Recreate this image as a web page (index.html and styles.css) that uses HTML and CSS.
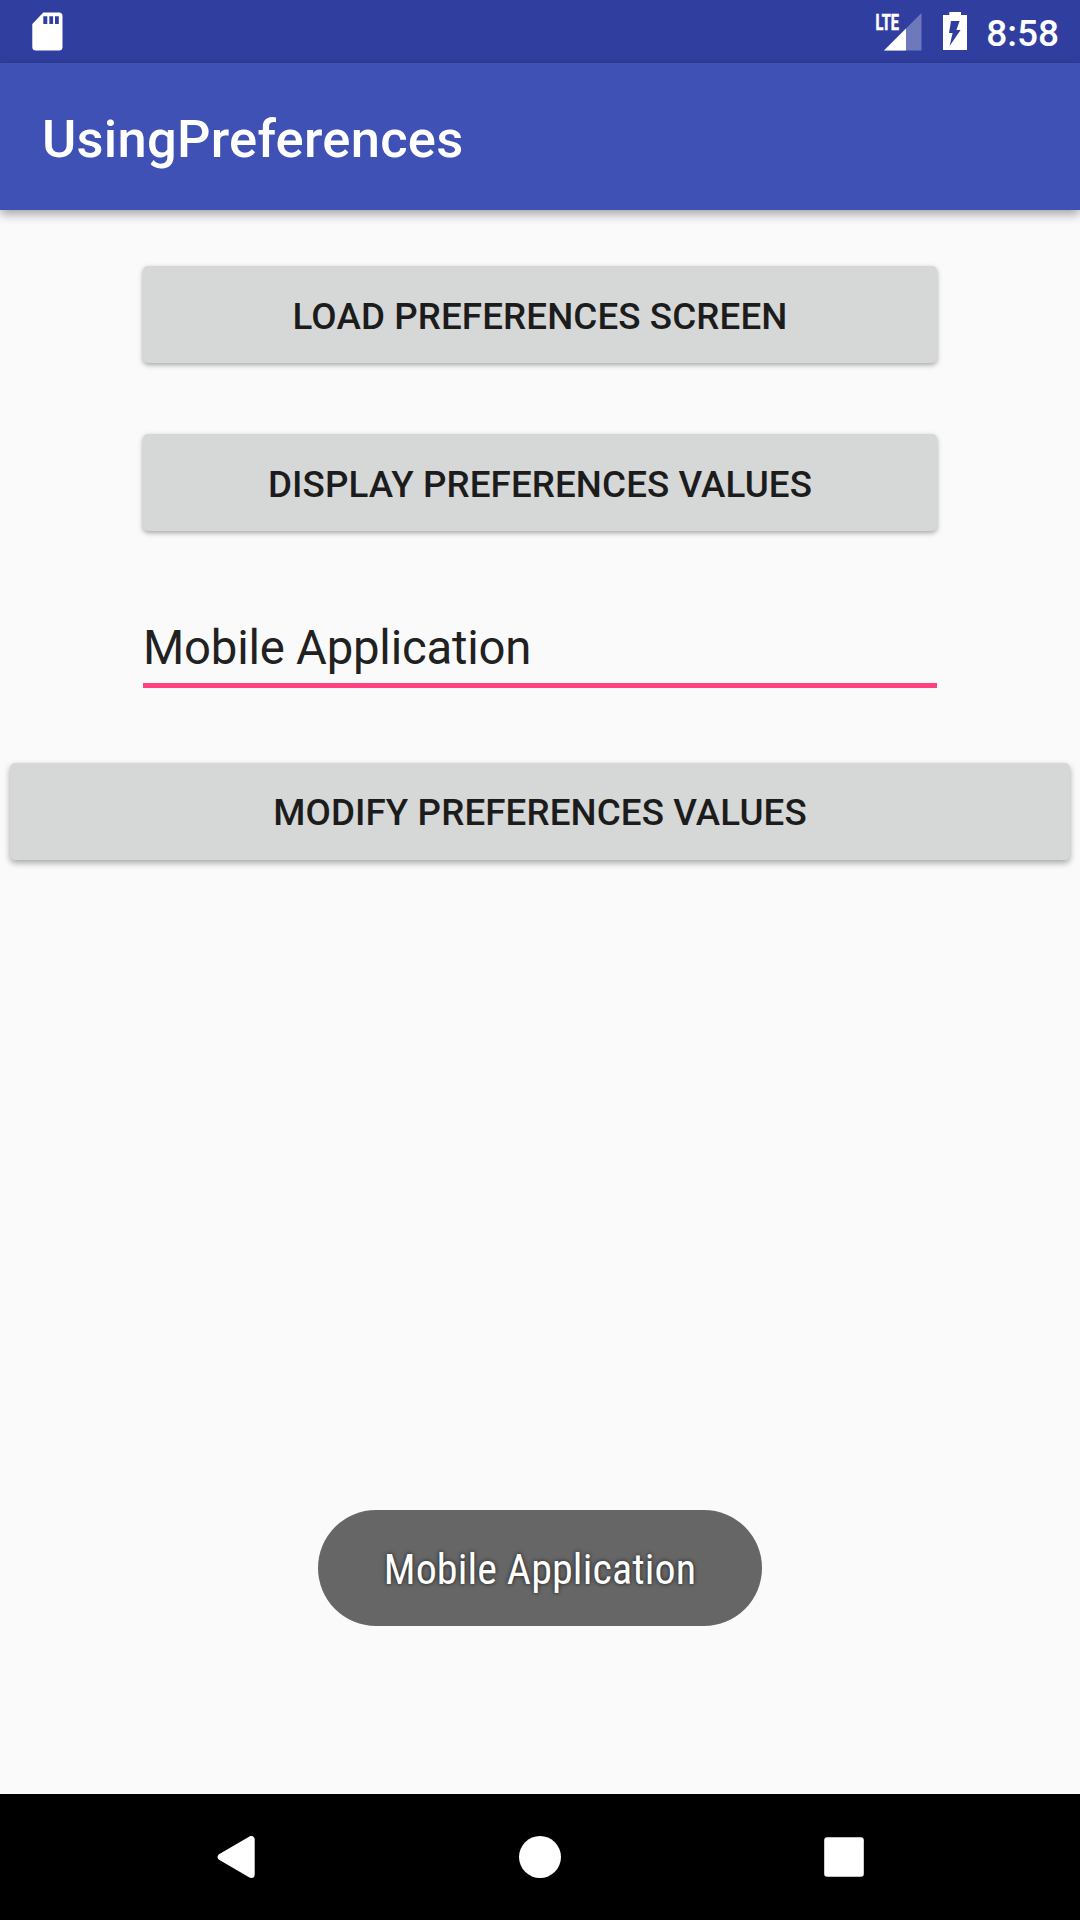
FILE: index.html
```html
<!DOCTYPE html>
<html lang="en">
<head>
<meta charset="utf-8">
<title>UsingPreferences</title>
<link rel="stylesheet" href="styles.css">
</head>
<body>
<div class="screen">
  <header class="status-bar">
    <svg class="sd-icon" width="31" height="39" viewBox="0 0 31 39">
      <path fill="#fff" fill-rule="evenodd" d="M11.3.5H27Q30.5.5 30.5 4V35Q30.5 38.5 27 38.5H4Q.3 38.5.3 35V12ZM11.3 4.3V12H15.3V4.3ZM17.3 4.3V12H21.1V4.3ZM23 4.3V12H26.8V4.3Z"/>
    </svg>
    <div class="status-right">
      <svg class="signal-icon" width="48" height="39" viewBox="0 0 48 39">
        <path fill="#fff" fill-opacity=".3" d="M9 38.5 46.5.9V38.5Z"/>
        <path fill="#fff" d="M9 38.5 31 16.5V38.5Z"/>
        <text class="lte" x="0.5" y="18" textLength="23.5" lengthAdjust="spacingAndGlyphs">LTE</text>
      </svg>
      <svg class="battery-icon" width="24" height="39" viewBox="0 0 24 39">
        <path fill="#fff" fill-rule="evenodd" d="M6.3 0H18V3H24V38H0V3H6.3ZM8 9H16.6L13.4 18H17.6L6.6 34 9.6 21H6Z"/>
      </svg>
      <span class="clock">8:58</span>
    </div>
  </header>
  <div class="app-bar"><h1 class="title">UsingPreferences</h1></div>
  <main class="content">
    <button class="button button-load">Load Preferences Screen</button>
    <button class="button button-display">Display Preferences Values</button>
    <input class="field" type="text" value="Mobile Application" spellcheck="false">
    <button class="button button-modify">Modify Preferences Values</button>
    <div class="toast"><span class="toast-text">Mobile Application</span></div>
  </main>
  <nav class="nav-bar">
    <svg width="42" height="42" viewBox="0 0 42 42"><path fill="#fff" stroke="#fff" stroke-width="7" stroke-linejoin="round" d="M5.2 21 35.2 3.5V38.5Z"/></svg>
    <svg width="42" height="42" viewBox="0 0 42 42"><circle cx="21" cy="21" r="21" fill="#fff"/></svg>
    <svg width="42" height="42" viewBox="0 0 42 42"><rect x="0.2" y="1.2" width="39.6" height="39.6" rx="3" fill="#fff"/></svg>
  </nav>
</div>
</body>
</html>
```
FILE: styles.css
```css
* { box-sizing: border-box; }

body {
  margin: 0;
  background: #fafafa;
  font-family: Roboto, "Liberation Sans", sans-serif;
}

.screen {
  width: 1080px;
  height: 1920px;
  display: flex;
  flex-direction: column;
  overflow: hidden;
}

.status-bar {
  height: 63px;
  flex: none;
  display: flex;
  justify-content: space-between;
  align-items: flex-start;
  padding: 12px 21px 0 32px;
  background: #303f9f;
  color: #fff;
}

.status-right {
  display: flex;
  align-items: flex-start;
}

.signal-icon {
  margin-right: 20px;
  overflow: visible;
}

.lte {
  fill: #fff;
  stroke: #fff;
  stroke-width: 0.6px;
  font-size: 22px;
  font-weight: 700;
}

.battery-icon { margin-right: 19px; }

.clock {
  font-size: 37px;
  font-weight: 500;
  line-height: 44px;
}

.app-bar {
  height: 147px;
  flex: none;
  display: flex;
  align-items: center;
  padding-left: 42px;
  background: #3f51b5;
  box-shadow: 0 4px 10px rgba(0, 0, 0, 0.36);
}

.title {
  margin: 0;
  color: #fff;
  font-size: 52.5px;
  font-weight: 500;
  letter-spacing: 0.25px;
  line-height: 62px;
  padding-top: 4px;
}

.content {
  flex: 1;
  display: flex;
  flex-direction: column;
  align-items: center;
  padding: 56px 10px 168px;
}

.button {
  flex: none;
  width: 794px;
  height: 97px;
  padding: 3px 0 0;
  border: 0;
  border-radius: 5px;
  background: #d6d8d7;
  box-shadow: 0 2px 5px rgba(0, 0, 0, 0.34);
  color: #1c1c1c;
  font: 500 36.75px Roboto, "Liberation Sans", sans-serif;
  letter-spacing: 0.1px;
  text-transform: uppercase;
}

.button-display { margin-top: 71px; }

.field {
  width: 794px;
  height: 78px;
  margin-top: 79px;
  padding: 3px 0 0;
  border: 0;
  border-bottom: 5px solid #ff4081;
  background: transparent;
  color: #212121;
  font: 47.25px Roboto, "Liberation Sans", sans-serif;
  letter-spacing: -0.2px;
  outline: none;
}

.button-modify {
  width: 1060px;
  margin-top: 75px;
  padding-top: 1px;
  box-shadow: 0 3px 6px rgba(0, 0, 0, 0.34);
}

.toast {
  display: flex;
  align-items: center;
  justify-content: center;
  width: 444px;
  height: 116px;
  margin-top: auto;
  padding-top: 2px;
  border-radius: 58px;
  background: #666;
}

.toast-text {
  color: #fff;
  font-family: "Roboto Condensed", Roboto, sans-serif;
  font-size: 42px;
  font-stretch: 75%;
  letter-spacing: 0.13px;
  white-space: nowrap;
  text-shadow: 0 0 4px rgba(0, 0, 0, 0.75);
}

.nav-bar {
  height: 126px;
  flex: none;
  display: flex;
  justify-content: space-between;
  align-items: center;
  padding: 0 214px 0 216px;
  background: #000;
}

.nav-bar svg:nth-child(2) { margin-right: 2px; }
```
